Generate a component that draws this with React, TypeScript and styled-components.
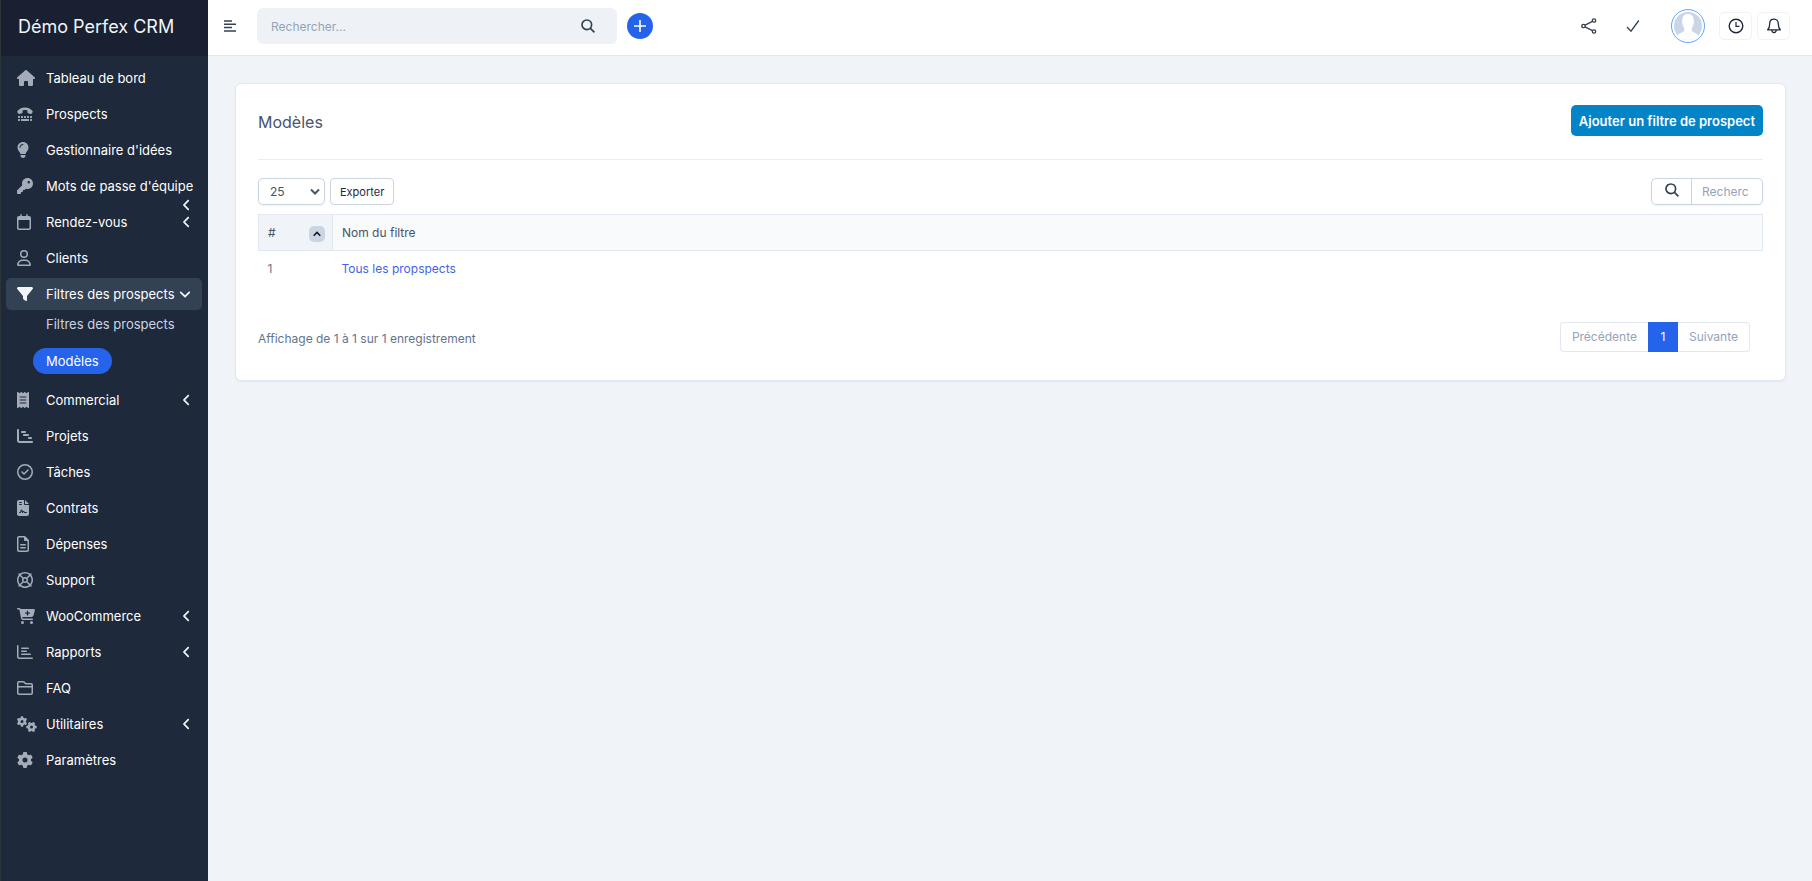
import React, { useState } from 'react';
import styled, { createGlobalStyle } from 'styled-components';
import {
  FaHouse, FaTty, FaLightbulb, FaKey, FaRegCalendar, FaRegUser, FaFilter, FaReceipt,
  FaChartGantt, FaRegCircleCheck, FaFileContract, FaRegFileLines, FaRegLifeRing,
  FaCartPlus, FaRegChartBar, FaRegFolderClosed, FaGears, FaGear, FaAngleLeft, FaAngleDown,
} from 'react-icons/fa6';

const Global = createGlobalStyle`
  *, *::before, *::after { box-sizing: border-box; }
  body {
    margin: 0;
    background: #f0f4f9;
    color: #64748b;
    font: 400 12px/20px Inter, "Liberation Sans", sans-serif;
  }
  button, input, select { font: inherit; color: inherit; }
  a { text-decoration: none; }
`;

const Shell = styled.div`
  display: grid;
  grid-template-columns: 208px minmax(0, 1fr);
  min-height: 100vh;
`;

const Sidebar = styled.aside`
  border-left: 1px solid #2d3436;
  background: #1e293b;
  font-size: 13px;
`;

const Brand = styled.a`
  display: flex;
  align-items: center;
  height: 56px;
  padding: 0 17px 2px;
  background: #182032;
  color: #f1f5f9;
  font-size: 18px;
`;

const Menu = styled.ul`
  display: flex;
  flex-direction: column;
  gap: 4px;
  margin: 0;
  padding: 6px 6px 6px 5px;
  list-style: none;
`;

const MenuItem = styled.li`
  position: relative;
`;

const MenuLink = styled.a<{ $open?: boolean }>`
  display: flex;
  align-items: center;
  height: 32px;
  padding: 0 11px;
  border-radius: 5px;
  background: ${(p) => (p.$open ? '#334155' : 'transparent')};
  color: ${(p) => (p.$open ? '#f1f5f9' : '#a5acb9')};
`;

const MenuIcon = styled.span<{ $width: number }>`
  display: flex;
  flex: 0 0 29px;
  svg { width: ${(p) => p.$width}px; height: 16px; }
`;

const MenuLabel = styled.span`
  flex: 1;
  color: #fff;
  white-space: nowrap;
`;

const Arrow = styled.span<{ $down?: boolean }>`
  display: flex;
  color: #f1f5f9;
  svg { width: ${(p) => (p.$down ? '12px' : '9px')}; height: 14px; }
`;

const DroppedArrow = styled(Arrow)`
  position: absolute;
  right: 11px;
  bottom: -10px;
`;

const SubMenu = styled.ul`
  display: flex;
  flex-direction: column;
  align-items: flex-start;
  gap: 11px;
  margin: 0;
  padding: 1px 0 6px 27px;
  list-style: none;
`;

const SubLink = styled.a<{ $active?: boolean }>`
  display: block;
  padding: 3px 13px;
  border-radius: 14px;
  background: ${(p) => (p.$active ? '#2563eb' : 'transparent')};
  color: ${(p) => (p.$active ? '#fff' : '#cbd5e1')};
`;

const TopBar = styled.header`
  display: flex;
  align-items: center;
  height: 56px;
  padding: 0 22px 4px 16px;
  border-bottom: 1px solid #e2e8f0;
  background: #fff;
`;

const IconButton = styled.button`
  display: flex;
  align-items: center;
  justify-content: center;
  width: 44px;
  height: 32px;
  padding: 0;
  border: 0;
  background: transparent;
  color: #334155;
`;

const MenuToggle = styled(IconButton)`
  width: 12px;
  margin-right: 21px;
`;

const GlobalSearch = styled.form`
  display: flex;
  align-items: center;
  width: 360px;
  height: 36px;
  padding-right: 7px;
  border-radius: 6px;
  background: #eef2f7;
`;

const GlobalInput = styled.input`
  flex: 1;
  min-width: 0;
  height: 36px;
  padding: 2px 14px 0;
  border: 0;
  background: transparent;
  &::placeholder { color: #94a3b8; opacity: 1; }
`;

const AddButton = styled(IconButton)`
  width: 26px;
  height: 26px;
  margin-left: 10px;
  border-radius: 50%;
  background: #2563eb;
  color: #fff;
`;

const TopActions = styled.div`
  display: flex;
  align-items: center;
  margin-left: auto;
`;

const AvatarButton = styled(IconButton)`
  width: 34px;
  height: 34px;
  margin: 0 9px 0 16px;
  border: 1px solid #60a5fa;
  border-radius: 50%;
`;

const FramedButton = styled(IconButton)`
  width: 33px;
  height: 28px;
  margin-left: 5px;
  border: 1px solid #f1f2f6;
  border-radius: 5px;
  color: #1e293b;
`;

const Content = styled.div`
  min-width: 0;
`;

const Main = styled.main`
  padding: 27px 26px 27px 27px;
`;

const Card = styled.section`
  padding: 21px 22px 28px;
  border: 1px solid #e2e8f0;
  border-radius: 6px;
  background: #fff;
  box-shadow: 0 1px 2px rgba(15, 23, 42, 0.06);
`;

const CardHead = styled.div`
  display: flex;
  align-items: flex-start;
  justify-content: space-between;
  height: 55px;
  border-bottom: 1px solid #e9ecf1;
`;

const Title = styled.h1`
  margin: 5px 0 0;
  color: #475569;
  font-size: 16px;
  font-weight: 400;
  line-height: 24px;
`;

const PrimaryButton = styled.button`
  height: 31px;
  padding: 0 8px;
  border: 0;
  border-radius: 5px;
  background: #0284c7;
  color: #fff;
  font-size: 13px;
  font-weight: 600;
`;

const Tools = styled.div`
  display: flex;
  gap: 5px;
  margin: 18px 0 9px;
`;

const SelectWrap = styled.div`
  position: relative;
  display: flex;
  width: 67px;
`;

const LengthSelect = styled.select`
  appearance: none;
  width: 100%;
  height: 27px;
  padding: 0 11px;
  border: 1px solid #cbd5e1;
  border-radius: 5px;
  background: #fff;
  color: #475569;
  box-shadow: 0 1px 2px rgba(15, 23, 42, 0.05);
`;

const SelectArrow = styled.svg`
  position: absolute;
  top: 10px;
  right: 5px;
  pointer-events: none;
`;

const ExportButton = styled.button`
  height: 27px;
  padding: 0 9px;
  border: 1px solid #cbd5e1;
  border-radius: 4px;
  background: #fff;
  color: #1e293b;
  font-size: 11px;
`;

const TableSearch = styled.label`
  display: flex;
  width: 112px;
  height: 27px;
  margin-left: auto;
  border: 1px solid #cbd5e1;
  border-radius: 5px;
  box-shadow: 0 1px 2px rgba(15, 23, 42, 0.05);
`;

const SearchIcon = styled.span`
  display: flex;
  flex: 0 0 40px;
  align-items: center;
  justify-content: center;
  padding-bottom: 3px;
  border-right: 1px solid #cbd5e1;
  color: #334155;
`;

const TableInput = styled.input`
  width: 0;
  flex: 1;
  min-width: 0;
  padding: 0;
  margin: 0 14px 0 10px;
  border: 0;
  background: transparent;
  &::placeholder { color: #94a3b8; opacity: 1; }
`;

const Table = styled.table`
  width: 100%;
  border-collapse: collapse;
  table-layout: fixed;
`;

const HeadCell = styled.th<{ $sorted?: boolean }>`
  width: ${(p) => (p.$sorted ? '74px' : 'auto')};
  height: 36px;
  padding: 0 9px;
  border: 1px solid #e2e8f0;
  background: ${(p) => (p.$sorted ? '#f0f4f9' : '#f8fafc')};
  color: #475569;
  font-weight: 400;
  text-align: left;
`;

const SortRow = styled.div`
  display: flex;
  align-items: center;
  justify-content: space-between;
`;

const SortButton = styled.button`
  display: flex;
  align-items: center;
  justify-content: center;
  width: 16px;
  height: 16px;
  margin: 2px -2px 0 0;
  padding: 0;
  border: 0;
  border-radius: 5px;
  background: #cbd5e1;
  color: #0f172a;
`;

const Cell = styled.td`
  height: 36px;
  padding: 0 9px;
`;

const CellLink = styled.a`
  color: #4263eb;
`;

const Footer = styled.div`
  display: flex;
  align-items: flex-start;
  justify-content: space-between;
  margin-top: 35px;
  padding-right: 13px;
`;

const Summary = styled.div`
  padding-top: 7px;
`;

const Pagination = styled.nav`
  display: flex;
  height: 30px;
`;

const PageButton = styled.button<{ $current?: boolean }>`
  min-width: 30px;
  padding: 0 11px;
  border: 1px solid ${(p) => (p.$current ? '#2563eb' : '#e2e8f0')};
  background: ${(p) => (p.$current ? '#2563eb' : '#fff')};
  color: ${(p) => (p.$current ? '#fff' : '#94a3b8')};
  &:first-child { border-right: 0; border-radius: 4px 0 0 4px; }
  &:last-child { border-left: 0; border-radius: 0 4px 4px 0; }
`;

const Magnifier = () => (
  <svg width="14" height="14" viewBox="0 0 14 14" fill="none" stroke="currentColor" strokeWidth="1.7" aria-hidden="true">
    <circle cx="5.8" cy="5.8" r="4.8" />
    <path d="M9.200 9.200 13.400 13.400" />
  </svg>
);

type Entry = {
  label: string;
  Icon: React.ComponentType;
  width: number;
  arrow?: boolean;
  dropped?: boolean;
};

const before: Entry[] = [
  { label: 'Tableau de bord', Icon: FaHouse, width: 18 },
  { label: 'Prospects', Icon: FaTty, width: 16 },
  { label: "Gestionnaire d'idées", Icon: FaLightbulb, width: 12 },
  { label: "Mots de passe d'équipe", Icon: FaKey, width: 16, dropped: true },
  { label: 'Rendez-vous', Icon: FaRegCalendar, width: 14, arrow: true },
  { label: 'Clients', Icon: FaRegUser, width: 14 },
];

const after: Entry[] = [
  { label: 'Commercial', Icon: FaReceipt, width: 12, arrow: true },
  { label: 'Projets', Icon: FaChartGantt, width: 16 },
  { label: 'Tâches', Icon: FaRegCircleCheck, width: 16 },
  { label: 'Contrats', Icon: FaFileContract, width: 12 },
  { label: 'Dépenses', Icon: FaRegFileLines, width: 12 },
  { label: 'Support', Icon: FaRegLifeRing, width: 16 },
  { label: 'WooCommerce', Icon: FaCartPlus, width: 18, arrow: true },
  { label: 'Rapports', Icon: FaRegChartBar, width: 16, arrow: true },
  { label: 'FAQ', Icon: FaRegFolderClosed, width: 16 },
  { label: 'Utilitaires', Icon: FaGears, width: 20, arrow: true },
  { label: 'Paramètres', Icon: FaGear, width: 16 },
];

const Item = ({ label, Icon, width, arrow, dropped }: Entry) => (
  <MenuItem>
    <MenuLink href="#">
      <MenuIcon $width={width}><Icon /></MenuIcon>
      <MenuLabel>{label}</MenuLabel>
      {arrow && <Arrow><FaAngleLeft /></Arrow>}
      {dropped && <DroppedArrow><FaAngleLeft /></DroppedArrow>}
    </MenuLink>
  </MenuItem>
);

export default function App() {
  const [query, setQuery] = useState('');
  const [filter, setFilter] = useState('');
  return (
    <>
      <Global />
      <Shell>
        <Sidebar>
          <Brand href="#">Démo Perfex CRM</Brand>
          <Menu>
            {before.map((e) => <Item key={e.label} {...e} />)}
            <MenuItem>
              <MenuLink href="#" $open aria-expanded="true">
                <MenuIcon $width={16}><FaFilter /></MenuIcon>
                <MenuLabel>Filtres des prospects</MenuLabel>
                <Arrow $down><FaAngleDown /></Arrow>
              </MenuLink>
              <SubMenu>
                <li><SubLink href="#">Filtres des prospects</SubLink></li>
                <li><SubLink href="#" $active>Modèles</SubLink></li>
              </SubMenu>
            </MenuItem>
            {after.map((e) => <Item key={e.label} {...e} />)}
          </Menu>
        </Sidebar>
        <Content>
          <TopBar>
            <MenuToggle aria-label="Menu">
              <svg width="12" height="12" viewBox="0 0 12 12" stroke="currentColor" strokeWidth="1.5">
                <path d="M0 1h8M0 4.300h12M0 7.600h8M0 11h12" />
              </svg>
            </MenuToggle>
            <GlobalSearch onSubmit={(e) => e.preventDefault()}>
              <GlobalInput aria-label="Rechercher" placeholder="Rechercher..." value={query} onChange={(e) => setQuery(e.target.value)} />
              <IconButton aria-label="Lancer la recherche"><Magnifier /></IconButton>
            </GlobalSearch>
            <AddButton aria-label="Ajouter">
              <svg width="14" height="14" viewBox="0 0 14 14" stroke="currentColor" strokeWidth="1.6">
                <path d="M7 1v12M1 7h12" />
              </svg>
            </AddButton>
            <TopActions>
              <IconButton aria-label="Partager">
                <svg width="16" height="16" viewBox="0 0 16 16" fill="none" stroke="currentColor" strokeWidth="1.3">
                  <circle cx="2.500" cy="8" r="1.700" /><circle cx="13" cy="2.500" r="1.700" /><circle cx="13" cy="13.500" r="1.700" />
                  <path d="M4 7.200 11.500 3.300M4 8.800l7.500 3.900" />
                </svg>
              </IconButton>
              <IconButton aria-label="Tâches">
                <svg width="14" height="14" viewBox="0 0 14 14" fill="none" stroke="currentColor" strokeWidth="1.3">
                  <path d="M1 8l4 4.200L12.800 1.500" />
                </svg>
              </IconButton>
              <AvatarButton aria-label="Profil">
                <svg width="28" height="28" viewBox="0 0 28 28">
                  <clipPath id="avatar"><circle cx="14" cy="14" r="14" /></clipPath>
                  <g clipPath="url(#avatar)">
                    <rect width="28" height="28" fill="#cbd5e8" />
                    <path fill="#fff" d="M14 2c3.800 0 5.800 2.800 5.800 6.600 0 1 .2 1.600 0 2.600-.3 1.600-1 3.300-1.900 4.600-.4 1.800-.4 3 .4 3.700 1.400 1 4.700 1.400 6 4.200V28H3.700v-4.300c1.300-2.800 4.600-3.200 6-4.200.8-.7.8-1.900.4-3.700-.9-1.300-1.600-3-1.900-4.600-.2-1 0-1.600 0-2.600C8.200 4.800 10.200 2 14 2z" />
                  </g>
                </svg>
              </AvatarButton>
              <FramedButton aria-label="Minuteurs">
                <svg width="16" height="16" viewBox="0 0 16 16" fill="none" stroke="currentColor" strokeWidth="1.400">
                  <circle cx="8" cy="8" r="6.800" /><path d="M8 4v4.300h3.500" strokeWidth="1.200" />
                </svg>
              </FramedButton>
              <FramedButton aria-label="Notifications">
                <svg width="16" height="16" viewBox="0 0 16 16" fill="none" stroke="currentColor" strokeWidth="1.300" strokeLinejoin="round">
                  <path d="M8 1.200c-2.700 0-4.300 2-4.300 4.500 0 3-.6 4.700-2 6.100h12.600c-1.400-1.400-2-3.100-2-6.100 0-2.500-1.600-4.500-4.300-4.500z" />
                  <path d="M5.800 12c.2 1.800 1 2.600 2.200 2.600s2-.8 2.200-2.600" />
                </svg>
              </FramedButton>
            </TopActions>
          </TopBar>
          <Main>
            <Card>
              <CardHead>
                <Title>Modèles</Title>
                <PrimaryButton>Ajouter un filtre de prospect</PrimaryButton>
              </CardHead>
              <Tools>
                <SelectWrap>
                  <LengthSelect aria-label="Lignes par page" defaultValue="25">
                    <option>10</option><option>25</option><option>50</option><option>100</option>
                  </LengthSelect>
                  <SelectArrow width="10" height="8" viewBox="0 0 10 8" fill="none" stroke="#475569" strokeWidth="2">
                    <path d="M1 1.500 5 5.500l4-4" />
                  </SelectArrow>
                </SelectWrap>
                <ExportButton>Exporter</ExportButton>
                <TableSearch>
                  <SearchIcon><Magnifier /></SearchIcon>
                  <TableInput aria-label="Recherche" placeholder="Recherche..." value={filter} onChange={(e) => setFilter(e.target.value)} />
                </TableSearch>
              </Tools>
              <Table>
                <thead>
                  <tr>
                    <HeadCell $sorted aria-sort="ascending">
                      <SortRow>
                        #
                        <SortButton aria-label="Trier">
                          <svg width="8" height="6" viewBox="0 0 8 6" fill="none" stroke="currentColor" strokeWidth="1.600">
                            <path d="M.7 4.800 4 1.500l3.300 3.300" />
                          </svg>
                        </SortButton>
                      </SortRow>
                    </HeadCell>
                    <HeadCell>Nom du filtre</HeadCell>
                  </tr>
                </thead>
                <tbody>
                  <tr>
                    <Cell>1</Cell>
                    <Cell><CellLink href="#">Tous les propspects</CellLink></Cell>
                  </tr>
                </tbody>
              </Table>
              <Footer>
                <Summary>Affichage de 1 à 1 sur 1 enregistrement</Summary>
                <Pagination aria-label="Pagination">
                  <PageButton>Précédente</PageButton>
                  <PageButton $current aria-current="page">1</PageButton>
                  <PageButton>Suivante</PageButton>
                </Pagination>
              </Footer>
            </Card>
          </Main>
        </Content>
      </Shell>
    </>
  );
}
